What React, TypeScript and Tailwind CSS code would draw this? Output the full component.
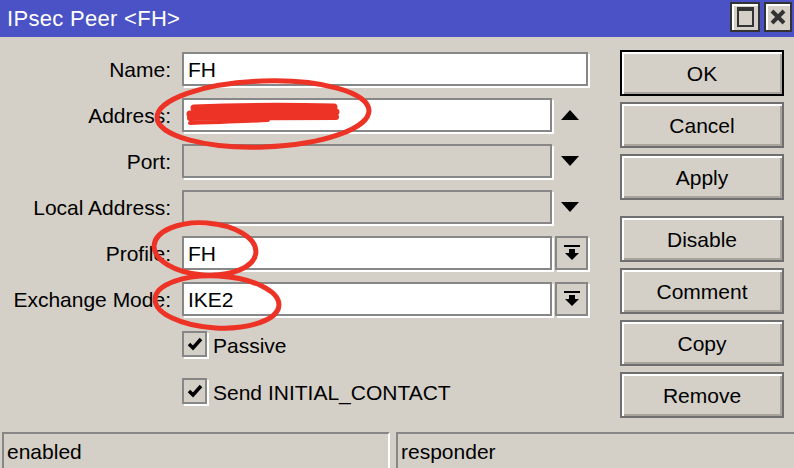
import React from "react";

const raised =
  "border-2 border-[#6f6f6f] bg-[#d4d0c8] shadow-[inset_2px_2px_0_#ffffff,inset_-2px_-2px_0_#a8a49c]";

const sunken =
  "border-2 border-[#878787] shadow-[2px_2px_0_#ffffff]";

const DropIcon = () => (
  <svg width="16" height="16" viewBox="0 0 16 16">
    <rect x="0" y="0" width="16" height="2" fill="#000" />
    <rect x="5" y="4" width="6" height="4" fill="#000" />
    <polygon points="1,8 15,8 8,15" fill="#000" />
  </svg>
);

const Arrow = ({ up }: { up?: boolean }) => (
  <svg width="18" height="10" viewBox="0 0 18 10">
    {up ? (
      <polygon points="9,0 18,10 0,10" fill="#000" />
    ) : (
      <polygon points="0,0 18,0 9,10" fill="#000" />
    )}
  </svg>
);

const Check = () => (
  <svg width="16" height="14" viewBox="0 0 16 14">
    <polyline
      points="2,7 6,11 14,2"
      fill="none"
      stroke="#000"
      strokeWidth="3.5"
    />
  </svg>
);

type Row = {
  label: string;
  value?: string;
  enabled: boolean;
  side?: "up" | "down" | "drop" | "none";
};

const rows: Row[] = [
  { label: "Name:", value: "FH", enabled: true, side: "none" },
  { label: "Address:", value: "", enabled: true, side: "up" },
  { label: "Port:", enabled: false, side: "down" },
  { label: "Local Address:", enabled: false, side: "down" },
  { label: "Profile:", value: "FH", enabled: true, side: "drop" },
  { label: "Exchange Mode:", value: "IKE2", enabled: true, side: "drop" },
];

const buttons = ["OK", "Cancel", "Apply", "Disable", "Comment", "Copy", "Remove"];

const App = () => {
  return (
    <div
      className="relative w-[794px] h-[468px] overflow-hidden bg-[#d4d0c8] text-black text-[21px] leading-none"
      style={{ fontFamily: '"Liberation Sans", Arial, sans-serif' }}
    >
      {/* title bar */}
      <div className="flex h-[37px] items-center bg-[#4a52c5] pl-[7px] pr-[2px]">
        <span className="flex-1 text-white text-[22px] tracking-[0.3px]">IPsec Peer &lt;FH&gt;</span>
        <div className="flex gap-[4px] self-start mt-[2px]">
          <div className="flex h-[30px] w-[30px] items-center justify-center border-2 border-[#333] bg-[#d4d0c8] shadow-[inset_2px_2px_0_#fff]">
            <div className="h-[20px] w-[17px] border-2 border-t-4 border-[#333]" />
          </div>
          <div className="flex h-[30px] w-[28px] items-center justify-center border-2 border-[#333] bg-[#d4d0c8] shadow-[inset_2px_2px_0_#fff]">
            <svg width="16" height="16" viewBox="0 0 16 16">
              <path d="M2 2 L14 14 M14 2 L2 14" stroke="#333" strokeWidth="4" />
            </svg>
          </div>
        </div>
      </div>

      <div className="flex h-[395px]">
        {/* form */}
        <div className="flex flex-col pt-[15px] w-[600px]">
          {rows.map((r) => (
            <div key={r.label} className="flex h-[34px] items-center mb-[12px]">
              <div className="w-[171px] text-right whitespace-nowrap">{r.label}</div>
              <div className="ml-[11px] flex h-full items-center">
                <div
                  className={`${sunken} flex h-full items-center pl-[4px] ${
                    r.side === "none" ? "w-[406px]" : "w-[370px]"
                  } ${r.enabled ? "bg-white" : "bg-[#d4d0c8]"}`}
                >
                  {r.value}
                </div>
                {(r.side === "up" || r.side === "down") && (
                  <div className="flex w-[36px] justify-center">
                    <Arrow up={r.side === "up"} />
                  </div>
                )}
                {r.side === "drop" && (
                  <div
                    className={`${sunken} ml-[3px] flex h-full w-[33px] items-center justify-center bg-[#d4d0c8]`}
                  >
                    <DropIcon />
                  </div>
                )}
              </div>
            </div>
          ))}
          <div className="ml-[182px] mt-[3px] flex flex-col gap-[21px]">
            {["Passive", "Send INITIAL_CONTACT"].map((c) => (
              <div key={c} className="flex items-center gap-[6px]">
                <div className={`${sunken} flex h-[26px] w-[25px] items-center justify-center bg-[#d4d0c8]`}>
                  <Check />
                </div>
                <span className="pt-[2px]">{c}</span>
              </div>
            ))}
          </div>
        </div>

        {/* buttons */}
        <div className="ml-[20px] flex flex-col pt-[13px]">
          {buttons.map((b, i) => (
            <div
              key={b}
              className={`${raised} flex h-[46px] w-[164px] items-center justify-center ${
                i === 0 ? "border-black" : ""
              } ${i === 3 ? "mt-[16px]" : i > 0 ? "mt-[6px]" : ""}`}
            >
              {b}
            </div>
          ))}
        </div>
      </div>

      {/* status bar */}
      <div className="flex h-[36px] gap-[6px] pl-[2px]">
        <div className="flex w-[388px] items-center border-l-2 border-t-2 border-[#878787] border-r-2 border-r-white pl-[3px]">
          enabled
        </div>
        <div className="flex flex-1 items-center border-l-2 border-t-2 border-[#878787] pl-[3px]">
          responder
        </div>
      </div>

      {/* red marker annotations */}
      <svg
        className="pointer-events-none absolute left-0 top-0"
        width="794"
        height="468"
        viewBox="0 0 794 468"
      >
        <g fill="none" stroke="#ec3326" strokeWidth="5" strokeLinecap="round">
          <ellipse cx="263" cy="114" rx="106" ry="33" transform="rotate(-2 263 114)" />
          <ellipse cx="205" cy="249" rx="51" ry="26" transform="rotate(4 205 249)" />
          <ellipse cx="217" cy="302" rx="62" ry="26" transform="rotate(3 217 302)" />
        </g>
        <g fill="none" stroke="#ec3326" strokeLinecap="round">
          <path d="M194 108 C240 106 290 106 334 107" strokeWidth="7" />
          <path d="M190 114 C240 112 290 111 336 112" strokeWidth="7" />
          <path d="M190 118 C240 117 290 117 336 117" strokeWidth="6" />
          <path d="M190 123 C220 122 250 121 268 120" strokeWidth="4" />
        </g>
      </svg>
    </div>
  );
};

export default App;
